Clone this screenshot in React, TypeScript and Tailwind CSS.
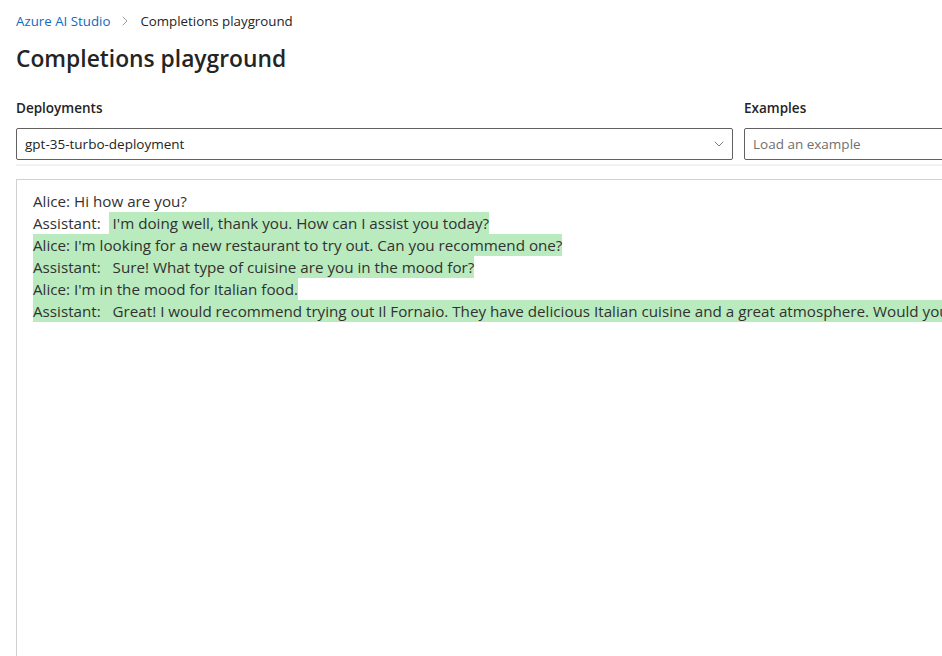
import React from 'react';
import { ChevronDown, ChevronRight } from 'lucide-react';

const FONT = { fontFamily: '"Segoe UI", "Open Sans", sans-serif' };

type Line = { plain: string; highlighted: string };

const LINES: Line[] = [
  { plain: 'Alice: Hi how are you?', highlighted: '' },
  { plain: 'Assistant:\u00a0\u00a0', highlighted: '\u00a0I\'m doing well, thank you. How can I assist you today?' },
  { plain: '', highlighted: 'Alice: I\'m looking for a new restaurant to try out. Can you recommend one?' },
  { plain: '', highlighted: 'Assistant:\u00a0\u00a0 Sure! What type of cuisine are you in the mood for?' },
  { plain: '', highlighted: 'Alice: I\'m in the mood for Italian food.' },
  {
    plain: '',
    highlighted:
      'Assistant:\u00a0\u00a0 Great! I would recommend trying out Il Fornaio. They have delicious Italian cuisine and a great atmosphere. Would you like me to make a reservation for you?',
  },
];

export default function App() {
  return (
    <div className="w-[942px] h-[656px] overflow-hidden bg-white text-[#323130]" style={FONT}>
      <div className="w-[1200px] px-4">
        {/* Breadcrumb */}
        <div className="pt-[11px] flex items-center text-[13.3px] leading-[20px]">
          <a href="#" className="text-[#0f6cbd]">Azure AI Studio</a>
          <ChevronRight size={16} strokeWidth={1.25} className="mx-[7px] text-[#8a8886]" />
          <span className="text-[#242424]">Completions playground</span>
        </div>

        <h1 className="mt-[13px] text-[22.8px] leading-[30px] font-semibold text-[#242424]">Completions playground</h1>

        {/* Selectors */}
        <div className="mt-[24px] flex gap-[11px]">
          <div className="w-[717px] shrink-0">
            <div className="text-[13.5px] leading-[20px] font-semibold text-[#242424]">Deployments</div>
            <button className="mt-[10px] w-full h-[32px] border border-[#616161] rounded-[2px] flex items-center justify-between pl-[8px] pr-[5px] text-[13.5px] text-[#242424]">
              <span>gpt-35-turbo-deployment</span>
              <ChevronDown size={16} strokeWidth={1.25} className="text-[#616161]" />
            </button>
          </div>
          <div className="w-[300px] shrink-0">
            <div className="text-[13.5px] leading-[20px] font-semibold text-[#242424]">Examples</div>
            <div className="mt-[10px] w-full h-[32px] border border-[#616161] rounded-[2px] flex items-center pl-[8px] text-[13.5px] text-[#707070]">
              Load an example
            </div>
          </div>
        </div>

        <div className="mt-[4px] h-[2px] bg-[#f3f2f1]" />

        {/* Prompt area */}
        <div className="mt-[13px] h-[600px] border border-[#d1d1d1] pt-[10px] px-4 text-[15.2px] leading-[22px] whitespace-nowrap">
          {LINES.map((line, i) => (
            <div key={i} className="h-[22px]">
              {line.plain && <span>{line.plain}</span>}
              {line.highlighted && <span className="inline-block bg-[#b9ebbf]">{line.highlighted}</span>}
            </div>
          ))}
        </div>
      </div>
    </div>
  );
}
